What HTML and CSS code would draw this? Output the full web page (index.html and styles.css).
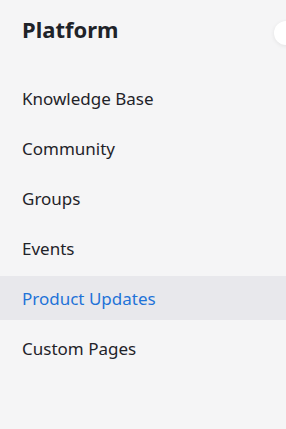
FILE: index.html
```html
<!DOCTYPE html>
<html lang="en">
<head>
    <meta charset="UTF-8">
    <meta name="viewport" content="width=device-width, initial-scale=1.0">
    <title>Platform</title>
    <link rel="stylesheet" href="styles.css">
</head>
<body>
    <nav class="sidebar">
        <div class="sidebar-header">
            <h2>Platform</h2>
        </div>
        <ul class="nav-list">
            <li class="nav-item">Knowledge Base</li>
            <li class="nav-item">Community</li>
            <li class="nav-item">Groups</li>
            <li class="nav-item">Events</li>
            <li class="nav-item active">Product Updates</li>
            <li class="nav-item">Custom Pages</li>
        </ul>
        <span class="collapse-handle"></span>
    </nav>
</body>
</html>
```

FILE: styles.css
```css
body {
    margin: 0;
    font-family: 'Noto Sans', 'Open Sans', sans-serif;
    background-color: #f5f5f6;
    color: #1f2329;
}

.sidebar {
    position: relative;
    height: 429px;
    overflow: hidden;
}

.sidebar-header {
    padding: 15px 22px 0;
    height: 76px;
    box-sizing: border-box;
}

h2 {
    margin: 0;
    font-size: 22px;
    line-height: 28px;
    font-weight: 700;
}

.nav-list {
    list-style: none;
    margin: 0;
    padding: 0;
    display: flex;
    flex-direction: column;
    gap: 6px;
}

.nav-item {
    height: 44px;
    display: flex;
    align-items: center;
    padding: 0 22px;
    font-size: 17px;
}

.nav-item.active {
    background-color: #e8e8ec;
    color: #1f73d8;
}

.collapse-handle {
    position: absolute;
    top: 21px;
    right: -12px;
    width: 24px;
    height: 24px;
    border-radius: 50%;
    background-color: #ffffff;
    box-shadow: 0 1px 4px rgba(0, 0, 0, 0.08);
}
```
